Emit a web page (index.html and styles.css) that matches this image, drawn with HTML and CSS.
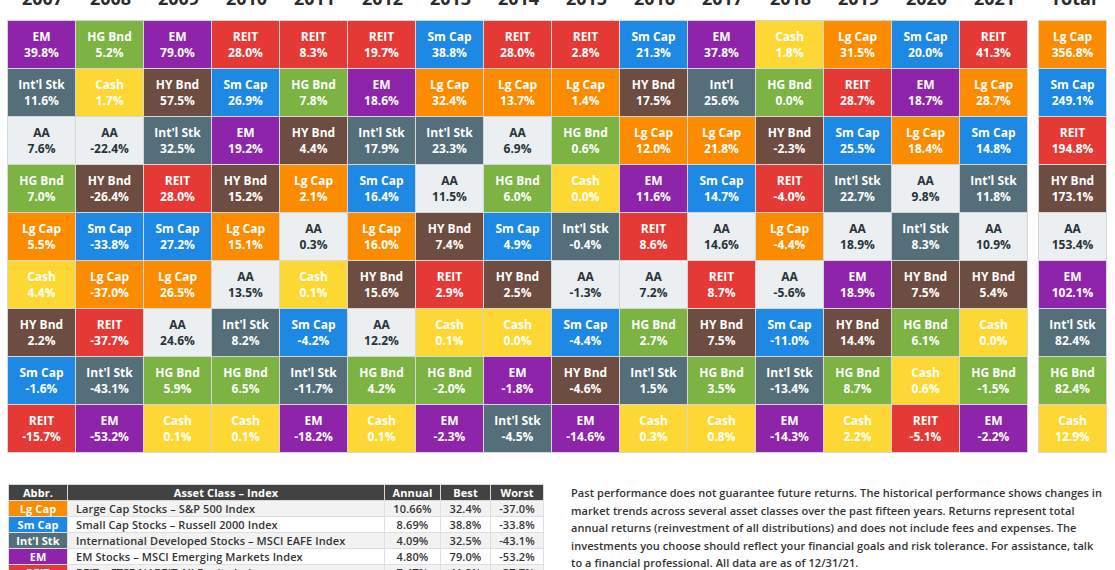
FILE: index.html
```html
<!DOCTYPE html>
<html>
<head>
<meta charset="utf-8">
<link rel="stylesheet" href="styles.css">
</head>
<body>
<div class="page">
  <div class="chart">
    <div class="block main">
      <div class="years">
        <div>2007</div><div>2008</div><div>2009</div><div>2010</div><div>2011</div><div>2012</div><div>2013</div><div>2014</div><div>2015</div><div>2016</div><div>2017</div><div>2018</div><div>2019</div><div>2020</div><div>2021</div>
      </div>
      <div class="grid">
        <!-- 2007 -->
        <div class="c em"><b>EM</b><span>39.8%</span></div>
        <div class="c intl"><b>Int'l Stk</b><span>11.6%</span></div>
        <div class="c aa"><b>AA</b><span>7.6%</span></div>
        <div class="c hg"><b>HG Bnd</b><span>7.0%</span></div>
        <div class="c lg"><b>Lg Cap</b><span>5.5%</span></div>
        <div class="c cash"><b>Cash</b><span>4.4%</span></div>
        <div class="c hy"><b>HY Bnd</b><span>2.2%</span></div>
        <div class="c sm"><b>Sm Cap</b><span>-1.6%</span></div>
        <div class="c reit"><b>REIT</b><span>-15.7%</span></div>
        <!-- 2008 -->
        <div class="c hg"><b>HG Bnd</b><span>5.2%</span></div>
        <div class="c cash"><b>Cash</b><span>1.7%</span></div>
        <div class="c aa"><b>AA</b><span>-22.4%</span></div>
        <div class="c hy"><b>HY Bnd</b><span>-26.4%</span></div>
        <div class="c sm"><b>Sm Cap</b><span>-33.8%</span></div>
        <div class="c lg"><b>Lg Cap</b><span>-37.0%</span></div>
        <div class="c reit"><b>REIT</b><span>-37.7%</span></div>
        <div class="c intl"><b>Int'l Stk</b><span>-43.1%</span></div>
        <div class="c em"><b>EM</b><span>-53.2%</span></div>
        <!-- 2009 -->
        <div class="c em"><b>EM</b><span>79.0%</span></div>
        <div class="c hy"><b>HY Bnd</b><span>57.5%</span></div>
        <div class="c intl"><b>Int'l Stk</b><span>32.5%</span></div>
        <div class="c reit"><b>REIT</b><span>28.0%</span></div>
        <div class="c sm"><b>Sm Cap</b><span>27.2%</span></div>
        <div class="c lg"><b>Lg Cap</b><span>26.5%</span></div>
        <div class="c aa"><b>AA</b><span>24.6%</span></div>
        <div class="c hg"><b>HG Bnd</b><span>5.9%</span></div>
        <div class="c cash"><b>Cash</b><span>0.1%</span></div>
        <!-- 2010 -->
        <div class="c reit"><b>REIT</b><span>28.0%</span></div>
        <div class="c sm"><b>Sm Cap</b><span>26.9%</span></div>
        <div class="c em"><b>EM</b><span>19.2%</span></div>
        <div class="c hy"><b>HY Bnd</b><span>15.2%</span></div>
        <div class="c lg"><b>Lg Cap</b><span>15.1%</span></div>
        <div class="c aa"><b>AA</b><span>13.5%</span></div>
        <div class="c intl"><b>Int'l Stk</b><span>8.2%</span></div>
        <div class="c hg"><b>HG Bnd</b><span>6.5%</span></div>
        <div class="c cash"><b>Cash</b><span>0.1%</span></div>
        <!-- 2011 -->
        <div class="c reit"><b>REIT</b><span>8.3%</span></div>
        <div class="c hg"><b>HG Bnd</b><span>7.8%</span></div>
        <div class="c hy"><b>HY Bnd</b><span>4.4%</span></div>
        <div class="c lg"><b>Lg Cap</b><span>2.1%</span></div>
        <div class="c aa"><b>AA</b><span>0.3%</span></div>
        <div class="c cash"><b>Cash</b><span>0.1%</span></div>
        <div class="c sm"><b>Sm Cap</b><span>-4.2%</span></div>
        <div class="c intl"><b>Int'l Stk</b><span>-11.7%</span></div>
        <div class="c em"><b>EM</b><span>-18.2%</span></div>
        <!-- 2012 -->
        <div class="c reit"><b>REIT</b><span>19.7%</span></div>
        <div class="c em"><b>EM</b><span>18.6%</span></div>
        <div class="c intl"><b>Int'l Stk</b><span>17.9%</span></div>
        <div class="c sm"><b>Sm Cap</b><span>16.4%</span></div>
        <div class="c lg"><b>Lg Cap</b><span>16.0%</span></div>
        <div class="c hy"><b>HY Bnd</b><span>15.6%</span></div>
        <div class="c aa"><b>AA</b><span>12.2%</span></div>
        <div class="c hg"><b>HG Bnd</b><span>4.2%</span></div>
        <div class="c cash"><b>Cash</b><span>0.1%</span></div>
        <!-- 2013 -->
        <div class="c sm"><b>Sm Cap</b><span>38.8%</span></div>
        <div class="c lg"><b>Lg Cap</b><span>32.4%</span></div>
        <div class="c intl"><b>Int'l Stk</b><span>23.3%</span></div>
        <div class="c aa"><b>AA</b><span>11.5%</span></div>
        <div class="c hy"><b>HY Bnd</b><span>7.4%</span></div>
        <div class="c reit"><b>REIT</b><span>2.9%</span></div>
        <div class="c cash"><b>Cash</b><span>0.1%</span></div>
        <div class="c hg"><b>HG Bnd</b><span>-2.0%</span></div>
        <div class="c em"><b>EM</b><span>-2.3%</span></div>
        <!-- 2014 -->
        <div class="c reit"><b>REIT</b><span>28.0%</span></div>
        <div class="c lg"><b>Lg Cap</b><span>13.7%</span></div>
        <div class="c aa"><b>AA</b><span>6.9%</span></div>
        <div class="c hg"><b>HG Bnd</b><span>6.0%</span></div>
        <div class="c sm"><b>Sm Cap</b><span>4.9%</span></div>
        <div class="c hy"><b>HY Bnd</b><span>2.5%</span></div>
        <div class="c cash"><b>Cash</b><span>0.0%</span></div>
        <div class="c em"><b>EM</b><span>-1.8%</span></div>
        <div class="c intl"><b>Int'l Stk</b><span>-4.5%</span></div>
        <!-- 2015 -->
        <div class="c reit"><b>REIT</b><span>2.8%</span></div>
        <div class="c lg"><b>Lg Cap</b><span>1.4%</span></div>
        <div class="c hg"><b>HG Bnd</b><span>0.6%</span></div>
        <div class="c cash"><b>Cash</b><span>0.0%</span></div>
        <div class="c intl"><b>Int'l Stk</b><span>-0.4%</span></div>
        <div class="c aa"><b>AA</b><span>-1.3%</span></div>
        <div class="c sm"><b>Sm Cap</b><span>-4.4%</span></div>
        <div class="c hy"><b>HY Bnd</b><span>-4.6%</span></div>
        <div class="c em"><b>EM</b><span>-14.6%</span></div>
        <!-- 2016 -->
        <div class="c sm"><b>Sm Cap</b><span>21.3%</span></div>
        <div class="c hy"><b>HY Bnd</b><span>17.5%</span></div>
        <div class="c lg"><b>Lg Cap</b><span>12.0%</span></div>
        <div class="c em"><b>EM</b><span>11.6%</span></div>
        <div class="c reit"><b>REIT</b><span>8.6%</span></div>
        <div class="c aa"><b>AA</b><span>7.2%</span></div>
        <div class="c hg"><b>HG Bnd</b><span>2.7%</span></div>
        <div class="c intl"><b>Int'l Stk</b><span>1.5%</span></div>
        <div class="c cash"><b>Cash</b><span>0.3%</span></div>
        <!-- 2017 -->
        <div class="c em"><b>EM</b><span>37.8%</span></div>
        <div class="c intl"><b>Int'l</b><span>25.6%</span></div>
        <div class="c lg"><b>Lg Cap</b><span>21.8%</span></div>
        <div class="c sm"><b>Sm Cap</b><span>14.7%</span></div>
        <div class="c aa"><b>AA</b><span>14.6%</span></div>
        <div class="c reit"><b>REIT</b><span>8.7%</span></div>
        <div class="c hy"><b>HY Bnd</b><span>7.5%</span></div>
        <div class="c hg"><b>HG Bnd</b><span>3.5%</span></div>
        <div class="c cash"><b>Cash</b><span>0.8%</span></div>
        <!-- 2018 -->
        <div class="c cash"><b>Cash</b><span>1.8%</span></div>
        <div class="c hg"><b>HG Bnd</b><span>0.0%</span></div>
        <div class="c hy"><b>HY Bnd</b><span>-2.3%</span></div>
        <div class="c reit"><b>REIT</b><span>-4.0%</span></div>
        <div class="c lg"><b>Lg Cap</b><span>-4.4%</span></div>
        <div class="c aa"><b>AA</b><span>-5.6%</span></div>
        <div class="c sm"><b>Sm Cap</b><span>-11.0%</span></div>
        <div class="c intl"><b>Int'l Stk</b><span>-13.4%</span></div>
        <div class="c em"><b>EM</b><span>-14.3%</span></div>
        <!-- 2019 -->
        <div class="c lg"><b>Lg Cap</b><span>31.5%</span></div>
        <div class="c reit"><b>REIT</b><span>28.7%</span></div>
        <div class="c sm"><b>Sm Cap</b><span>25.5%</span></div>
        <div class="c intl"><b>Int'l Stk</b><span>22.7%</span></div>
        <div class="c aa"><b>AA</b><span>18.9%</span></div>
        <div class="c em"><b>EM</b><span>18.9%</span></div>
        <div class="c hy"><b>HY Bnd</b><span>14.4%</span></div>
        <div class="c hg"><b>HG Bnd</b><span>8.7%</span></div>
        <div class="c cash"><b>Cash</b><span>2.2%</span></div>
        <!-- 2020 -->
        <div class="c sm"><b>Sm Cap</b><span>20.0%</span></div>
        <div class="c em"><b>EM</b><span>18.7%</span></div>
        <div class="c lg"><b>Lg Cap</b><span>18.4%</span></div>
        <div class="c aa"><b>AA</b><span>9.8%</span></div>
        <div class="c intl"><b>Int'l Stk</b><span>8.3%</span></div>
        <div class="c hy"><b>HY Bnd</b><span>7.5%</span></div>
        <div class="c hg"><b>HG Bnd</b><span>6.1%</span></div>
        <div class="c cash"><b>Cash</b><span>0.6%</span></div>
        <div class="c reit"><b>REIT</b><span>-5.1%</span></div>
        <!-- 2021 -->
        <div class="c reit"><b>REIT</b><span>41.3%</span></div>
        <div class="c lg"><b>Lg Cap</b><span>28.7%</span></div>
        <div class="c sm"><b>Sm Cap</b><span>14.8%</span></div>
        <div class="c intl"><b>Int'l Stk</b><span>11.8%</span></div>
        <div class="c aa"><b>AA</b><span>10.9%</span></div>
        <div class="c hy"><b>HY Bnd</b><span>5.4%</span></div>
        <div class="c cash"><b>Cash</b><span>0.0%</span></div>
        <div class="c hg"><b>HG Bnd</b><span>-1.5%</span></div>
        <div class="c em"><b>EM</b><span>-2.2%</span></div>
      </div>
    </div>
    <div class="block total">
      <div class="years"><div>Total</div></div>
      <div class="grid">
        <div class="c lg"><b>Lg Cap</b><span>356.8%</span></div>
        <div class="c sm"><b>Sm Cap</b><span>249.1%</span></div>
        <div class="c reit"><b>REIT</b><span>194.8%</span></div>
        <div class="c hy"><b>HY Bnd</b><span>173.1%</span></div>
        <div class="c aa"><b>AA</b><span>153.4%</span></div>
        <div class="c em"><b>EM</b><span>102.1%</span></div>
        <div class="c intl"><b>Int'l Stk</b><span>82.4%</span></div>
        <div class="c hg"><b>HG Bnd</b><span>82.4%</span></div>
        <div class="c cash"><b>Cash</b><span>12.9%</span></div>
      </div>
    </div>
  </div>

  <div class="bottom">
    <table class="legend">
      <colgroup>
        <col class="w-abbr"><col class="w-name"><col class="w-ann"><col class="w-best"><col class="w-worst">
      </colgroup>
      <thead>
        <tr><th>Abbr.</th><th>Asset Class – Index</th><th>Annual</th><th>Best</th><th>Worst</th></tr>
      </thead>
      <tbody>
        <tr><td class="ab lg">Lg Cap</td><td class="nm">Large Cap Stocks – S&amp;P 500 Index</td><td>10.66%</td><td>32.4%</td><td>-37.0%</td></tr>
        <tr><td class="ab sm">Sm Cap</td><td class="nm">Small Cap Stocks – Russell 2000 Index</td><td>8.69%</td><td>38.8%</td><td>-33.8%</td></tr>
        <tr><td class="ab intl">Int'l Stk</td><td class="nm">International Developed Stocks – MSCI EAFE Index</td><td>4.09%</td><td>32.5%</td><td>-43.1%</td></tr>
        <tr><td class="ab em">EM</td><td class="nm">EM Stocks – MSCI Emerging Markets Index</td><td>4.80%</td><td>79.0%</td><td>-53.2%</td></tr>
        <tr><td class="ab reit">REIT</td><td class="nm">REIT – FTSE NAREIT All Equity Index</td><td>7.47%</td><td>41.3%</td><td>-37.7%</td></tr>
      </tbody>
    </table>
    <p class="note">Past performance does not guarantee future returns. The historical performance shows changes in market trends across several asset classes over the past fifteen years. Returns represent total annual returns (reinvestment of all distributions) and does not include fees and expenses. The investments you choose should reflect your financial goals and risk tolerance. For assistance, talk to a financial professional. All data are as of 12/31/21.</p>
  </div>
</div>
</body>
</html>
```

FILE: styles.css
```css
html, body {
  margin: 0;
  padding: 0;
  background: #ffffff;
}

body {
  font-family: "Open Sans", "Noto Sans", "DejaVu Sans", sans-serif;
  color: #333333;
  overflow: hidden;
}

.page {
  padding-left: 7px;
}

.chart {
  display: flex;
  gap: 10px;
  margin-top: -12px;
}

.years {
  display: grid;
  grid-auto-flow: column;
  grid-auto-columns: 68px;
  padding-left: 1px;
  margin-bottom: 12px;
  font-size: 18px;
  font-weight: 700;
  line-height: 20px;
  color: #2b2b2b;
}

.years > div {
  text-align: center;
  margin-right: -1px;
}

.grid {
  display: grid;
  grid-auto-flow: column;
  grid-template-rows: repeat(9, 47px);
  grid-auto-columns: 67px;
  gap: 1px;
  background: #d6d6d6;
  border: 1px solid #d6d6d6;
}

.c {
  display: flex;
  flex-direction: column;
  align-items: center;
  justify-content: center;
  color: #ffffff;
  font-size: 12px;
  font-weight: 700;
  line-height: 15.5px;
  text-align: center;
  white-space: nowrap;
}

.c b, .c span {
  display: block;
  font-weight: 700;
}

.lg { background: #fb8c00; }
.sm { background: #1e88e5; }
.intl { background: #546e7a; }
.em { background: #8e24aa; }
.reit { background: #e53935; }
.hy { background: #6d4c41; }
.hg { background: #7cb342; }
.cash { background: #fdd835; }
.aa { background: #eceff1; color: #263238; }

.bottom {
  display: flex;
  align-items: flex-start;
  margin-top: 31px;
}

.legend {
  margin-left: 1px;
  border-collapse: collapse;
  table-layout: fixed;
  width: 535px;
  font-size: 11px;
  font-weight: 600;
  line-height: 15px;
  letter-spacing: 0.1px;
  border: 1px solid #d9d9d9;
}

.w-abbr { width: 59px; }
.w-name { width: 317px; }
.w-ann { width: 56px; }
.w-best { width: 50px; }
.w-worst { width: 53px; }

.legend th {
  background: #424242;
  color: #ffffff;
  font-weight: 700;
  height: 15px;
  padding: 0;
  text-align: center;
  border: 1px solid #d9d9d9;
  white-space: nowrap;
}

.legend td {
  height: 15px;
  padding: 0;
  text-align: center;
  border: 1px solid #dedede;
  white-space: nowrap;
  color: #333333;
}

.legend tbody tr:nth-child(odd) td { background: #f2f2f2; }
.legend tbody tr:nth-child(even) td { background: #ffffff; }

.legend td.nm {
  text-align: left;
  padding-left: 8px;
}

.legend td.ab {
  color: #ffffff;
  font-weight: 700;
}

.legend tbody tr td.lg { background: #fb8c00; }
.legend tbody tr td.sm { background: #1e88e5; }
.legend tbody tr td.intl { background: #546e7a; }
.legend tbody tr td.em { background: #8e24aa; }
.legend tbody tr td.reit { background: #e53935; }

.note {
  margin: 0 0 0 27px;
  width: 533px;
  font-size: 11px;
  font-weight: 600;
  line-height: 17.5px;
  letter-spacing: 0.065px;
  color: #333333;
}
```
